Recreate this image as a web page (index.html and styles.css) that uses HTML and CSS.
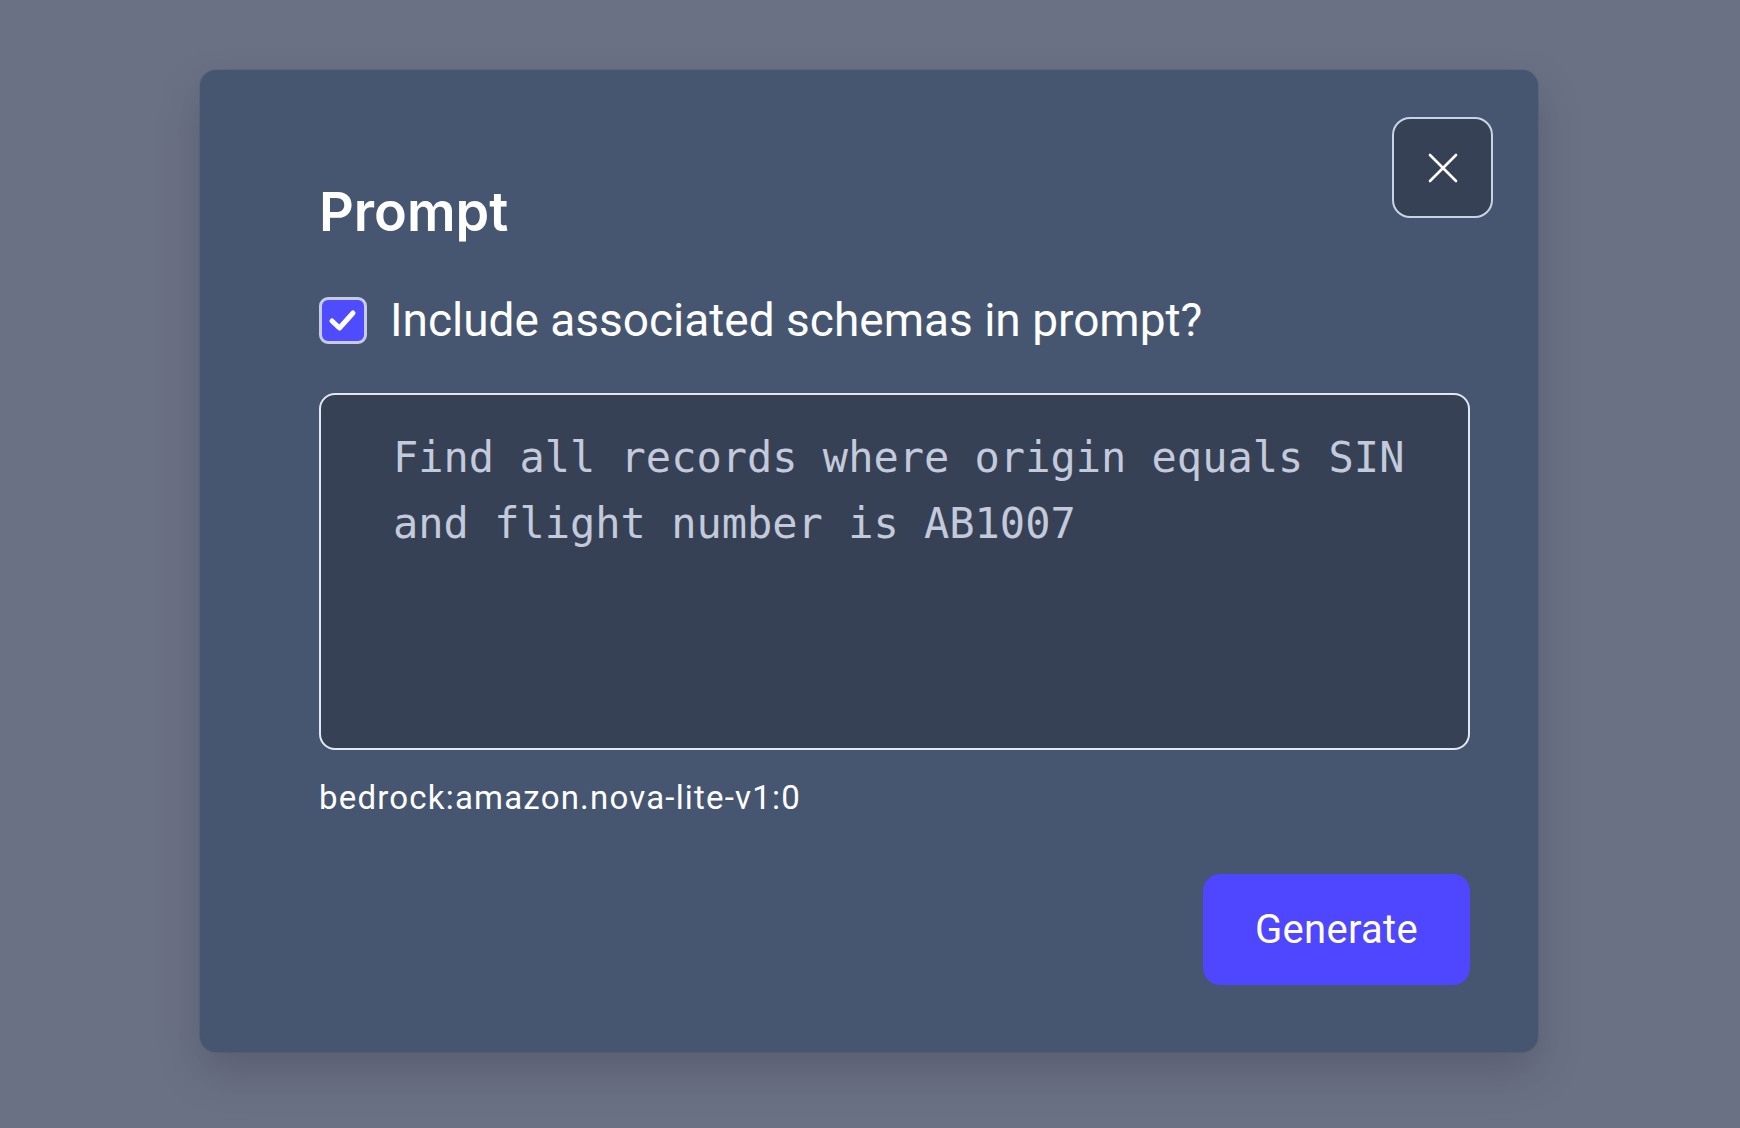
FILE: index.html
```html
<!DOCTYPE html>
<html lang="en">
<head>
<meta charset="utf-8">
<title>Prompt</title>
<link rel="stylesheet" href="styles.css">
</head>
<body>
<div class="overlay">
  <div class="modal">
    <button class="close" aria-label="Close">
      <svg width="30" height="30" viewBox="0 0 30 30" fill="none" stroke="#ffffff" stroke-width="2.6" stroke-linecap="round"><path d="M2 2 L28 28 M28 2 L2 28"/></svg>
    </button>
    <div class="content">
      <h2 class="title">Prompt</h2>
      <label class="check-row">
        <span class="checkbox">
          <svg width="32" height="32" viewBox="0 0 32 32" fill="none" stroke="#ffffff" stroke-width="5" stroke-linecap="round" stroke-linejoin="round"><path d="M5 17 L12.5 24 L26 9"/></svg>
        </span>
        <span class="check-label">Include associated schemas in prompt?</span>
      </label>
      <div class="textarea">Find all records where origin equals SIN and flight number is AB1007</div>
      <div class="model">bedrock:amazon.nova-lite-v1:0</div>
      <div class="actions">
        <button class="generate">Generate</button>
      </div>
    </div>
  </div>
</div>
</body>
</html>
```

FILE: styles.css
```css
* { box-sizing: border-box; }
html, body { margin: 0; padding: 0; }
body {
  width: 1740px;
  height: 1128px;
  background: #6b7185;
  font-family: Roboto, "Noto Sans", sans-serif;
  overflow: hidden;
}
.overlay {
  display: flex;
  justify-content: center;
  padding-top: 70px;
  height: 100%;
}
.modal {
  position: relative;
  width: 1338px;
  height: 982px;
  margin-left: -2px;
  background: #465670;
  border-radius: 16px;
  box-shadow: 0 20px 40px rgba(40, 45, 60, 0.25), 0 0 0 1px rgba(80, 95, 125, 0.4);
  padding: 110px 68px 68px 119px;
}
.close {
  position: absolute;
  top: 47px;
  right: 45px;
  width: 101px;
  height: 101px;
  background: #374155;
  border: 2px solid #c9d3e6;
  border-radius: 18px;
  display: flex;
  align-items: center;
  justify-content: center;
  padding: 0;
  cursor: pointer;
}
.content {
  display: flex;
  flex-direction: column;
}
.title {
  margin: 0;
  font-family: Inter, sans-serif;
  font-weight: 600;
  font-size: 54px;
  line-height: 64px;
  color: #ffffff;
  letter-spacing: 0px;
}
.check-row {
  display: flex;
  align-items: center;
  gap: 23px;
  margin-top: 52px;
  height: 48px;
}
.checkbox {
  width: 48px;
  height: 47px;
  border-radius: 9px;
  background: #4f4bff;
  border: 3px solid #c6cce6;
  display: flex;
  align-items: center;
  justify-content: center;
  flex: none;
}
.check-label {
  font-size: 46px;
  color: #ffffff;
  line-height: 48px;
  letter-spacing: 0px;
}
.textarea {
  margin-top: 49px;
  height: 357px;
  width: 1151px;
  background: #374155;
  border: 2px solid #e2e8f0;
  border-radius: 16px;
  padding: 30px 40px 0 72px;
  font-family: "DejaVu Sans Mono", "Liberation Mono", monospace;
  font-size: 42px;
  line-height: 66px;
  color: #c3cadb;
}
.model {
  margin-top: 28px;
  font-size: 33px;
  line-height: 40px;
  letter-spacing: 1.2px;
  color: #ffffff;
}
.actions {
  display: flex;
  justify-content: flex-end;
  margin-top: 56px;
}
.generate {
  width: 267px;
  height: 111px;
  background: #4f46ff;
  border: none;
  border-radius: 17px;
  color: #ffffff;
  font-family: Roboto, sans-serif;
  font-size: 40px;
  letter-spacing: 0.3px;
  cursor: pointer;
}
```
